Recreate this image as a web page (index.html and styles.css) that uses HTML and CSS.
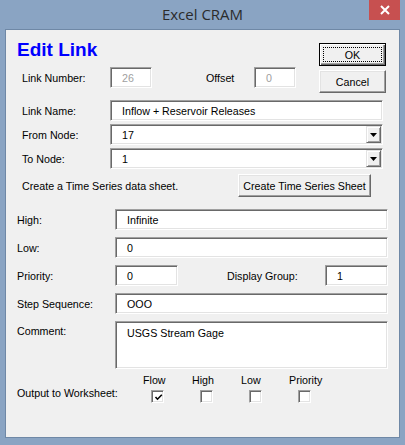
FILE: index.html
```html
<!DOCTYPE html>
<html>
<head>
<meta charset="utf-8">
<link rel="stylesheet" href="styles.css">
</head>
<body>
<div class="window">
  <div class="titlebar">
    <span class="title">Excel CRAM</span>
    <div class="close"><svg width="10" height="10" viewBox="0 0 10 10"><path d="M1 1 L9 9 M9 1 L1 9" stroke="#fff" stroke-width="2" fill="none"/></svg></div>
  </div>
  <div class="client">
    <div class="top">
      <div class="top-left">
        <h1 class="heading">Edit Link</h1>
        <div class="row-num">
          <span class="lbl-a">Link Number:</span>
          <div class="tb tb-small disabled">26</div>
          <span class="lbl-offset">Offset</span>
          <div class="tb tb-small disabled">0</div>
        </div>
      </div>
      <div class="btn-col">
        <div class="btn btn-default"><span class="focus">OK</span></div>
        <div class="btn">Cancel</div>
      </div>
    </div>

    <div class="upper">
      <div class="row"><span class="lbl-u">Link Name:</span><div class="tb grow">Inflow + Reservoir Releases</div></div>
      <div class="row"><span class="lbl-u">From Node:</span><div class="tb grow combo"><span class="combo-text">17</span><span class="drop"><svg width="7" height="4" viewBox="0 0 7 4"><path d="M0 0 H7 L3.5 4 Z" fill="#000"/></svg></span></div></div>
      <div class="row"><span class="lbl-u">To Node:</span><div class="tb grow combo"><span class="combo-text">1</span><span class="drop"><svg width="7" height="4" viewBox="0 0 7 4"><path d="M0 0 H7 L3.5 4 Z" fill="#000"/></svg></span></div></div>
    </div>

    <div class="create">
      <span class="lbl-create">Create a Time Series data sheet.</span>
      <div class="btn btn-create">Create Time Series Sheet</div>
    </div>

    <div class="lower">
      <div class="row"><span class="lbl-l">High:</span><div class="tb tb-l grow">Infinite</div></div>
      <div class="row"><span class="lbl-l">Low:</span><div class="tb tb-l grow">0</div></div>
      <div class="row">
        <span class="lbl-l">Priority:</span><div class="tb tb-l tb-mid">0</div>
        <span class="lbl-l lbl-group">Display Group:</span><div class="tb tb-l tb-mid">1</div>
      </div>
      <div class="row"><span class="lbl-l">Step Sequence:</span><div class="tb tb-l grow">OOO</div></div>
      <div class="row row-top"><span class="lbl-l lbl-comment">Comment:</span><div class="tb tb-l grow tb-comment">USGS Stream Gage</div></div>
    </div>

    <div class="outgrid">
      <span></span>
      <span class="cb-label">Flow</span>
      <span class="cb-label">High</span>
      <span class="cb-label">Low</span>
      <span class="cb-label cb-label-p">Priority</span>
      <span class="out-label">Output to Worksheet:</span>
      <span class="cb"><svg width="9" height="9" viewBox="0 0 9 9"><path d="M1.5 4 L3.5 6.2 L7.8 1.8" stroke="#000" stroke-width="1.6" fill="none"/></svg></span>
      <span class="cb"></span>
      <span class="cb"></span>
      <span class="cb"></span>
    </div>
  </div>
</div>
</body>
</html>
```

FILE: styles.css
```css
* { box-sizing: border-box; }

body {
  margin: 0;
  background: #8aa4c3;
  font-family: "Liberation Sans", Arial, sans-serif;
  font-size: 10.7px;
  color: #000;
}

.window {
  width: 405px;
  height: 445px;
  background: #8aa4c3;
  position: relative;
}

.titlebar {
  height: 29px;
  display: flex;
  justify-content: center;
  padding-top: 4px;
}

.title {
  font-family: "Open Sans", "Noto Sans", sans-serif;
  font-size: 15px;
  line-height: 20px;
  color: #2b2b2b;
}

.close {
  position: absolute;
  top: 0;
  right: 5px;
  width: 31px;
  height: 20px;
  background: #c75050;
  display: flex;
  align-items: center;
  justify-content: center;
}

.client {
  margin: 0 5px;
  height: 409px;
  background: #f0f0f0;
  border: 1px solid #6f88a6;
}

/* common controls */
.tb {
  height: 21px;
  background: #fff;
  border: 1px solid;
  border-color: #a0a0a0 #fff #fff #a0a0a0;
  box-shadow: inset 1px 1px #696969, inset -1px -1px #e3e3e3;
  display: flex;
  align-items: center;
  padding-left: 11px;
  white-space: nowrap;
}

.tb.disabled { color: #a0a0a0; }

.grow { flex: 1; }

.btn {
  height: 23px;
  background: #f0f0f0;
  border: 1px solid;
  border-color: #fff #696969 #696969 #fff;
  box-shadow: inset -1px -1px #a0a0a0, inset 1px 1px #e3e3e3;
  display: flex;
  align-items: center;
  justify-content: center;
  white-space: nowrap;
}

.btn-default {
  border: 1px solid #000;
  box-shadow: inset 1px 1px #fff, inset -1px -1px #696969, inset -2px -2px #a0a0a0;
  padding: 3px;
  align-items: stretch;
}

.focus {
  flex: 1;
  border: 1px dotted #000;
  display: flex;
  align-items: center;
  justify-content: center;
}

/* top block */
.top {
  display: flex;
  align-items: flex-start;
  padding-right: 13px;
}

.top-left {
  flex: 1;
  padding-top: 9px;
}

.heading {
  margin: 0 0 6px 11px;
  font-family: "Liberation Sans", Arial, sans-serif;
  font-weight: bold;
  font-size: 19px;
  line-height: 22px;
  color: #0000ff;
}

.row-num {
  display: flex;
  align-items: center;
  padding-left: 16px;
}

.lbl-a { width: 88px; }

.tb-small { width: 42px; }

.lbl-offset {
  margin-left: 54px;
  width: 48px;
}

.btn-col {
  width: 67px;
  padding-top: 13px;
  display: flex;
  flex-direction: column;
  gap: 4px;
}

/* upper rows */
.upper {
  padding: 7px 16px 0 16px;
  display: flex;
  flex-direction: column;
  gap: 3px;
}

.row {
  display: flex;
  align-items: center;
}

.row-top { align-items: flex-start; }

.lbl-u { width: 88px; }

.combo {
  padding: 1px 1px 1px 11px;
  align-items: stretch;
}

.combo-text {
  flex: 1;
  display: flex;
  align-items: center;
}

.drop {
  width: 15px;
  background: #f0f0f0;
  border: 1px solid;
  border-color: #e3e3e3 #696969 #696969 #e3e3e3;
  box-shadow: inset 1px 1px #fff, inset -1px -1px #a0a0a0;
  display: flex;
  align-items: center;
  justify-content: center;
}

/* create row */
.create {
  margin-top: 5px;
  padding-left: 16px;
  display: flex;
  align-items: center;
}

.lbl-create { width: 216px; }

.btn-create { width: 133px; }

/* lower rows */
.lower {
  margin-top: 12px;
  padding: 0 11px;
  display: flex;
  flex-direction: column;
  gap: 7px;
}

.lbl-l { width: 98px; }

.tb-mid { width: 63px; }

.lbl-group { margin-left: 49px; }

.lbl-comment { margin-top: 4px; }

.tb-comment {
  height: 48px;
  align-items: flex-start;
  padding-top: 5px;
  line-height: 13px;
}

/* output checkboxes */
.outgrid {
  margin-top: 5px;
  padding-left: 11px;
  display: grid;
  grid-template-columns: 116px repeat(4, 49px);
  grid-template-rows: 13px 16px;
  line-height: 13px;
}

.cb-label { padding-left: 10px; }
.cb-label-p { padding-left: 9px; }

.out-label { align-self: start; white-space: nowrap; }

.cb {
  align-self: end;
  margin-left: 18px;
  width: 13px;
  height: 13px;
  background: #fff;
  border: 1px solid;
  border-color: #a0a0a0 #fff #fff #a0a0a0;
  box-shadow: inset 1px 1px #696969, inset -1px -1px #e3e3e3;
  display: flex;
  align-items: center;
  justify-content: center;
  padding: 1px 0 0 1px;
}
```
